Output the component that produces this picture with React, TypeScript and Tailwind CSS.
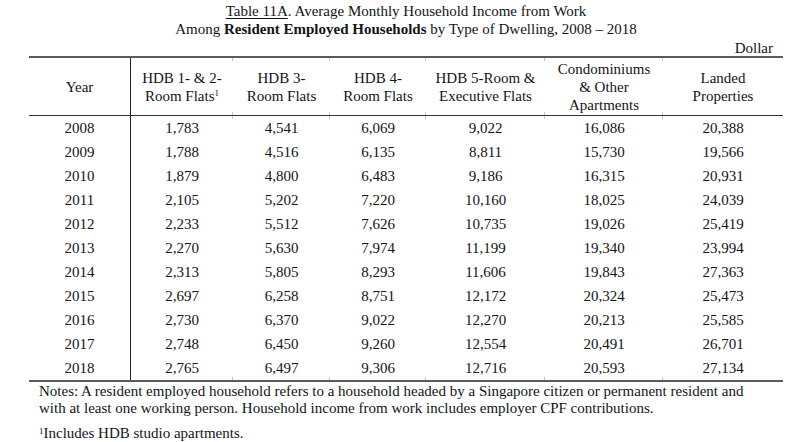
const columns = [
  { key: "year", label: ["Year"] },
  { key: "hdb12", label: ["HDB 1- & 2-", "Room Flats"], sup: true },
  { key: "hdb3", label: ["HDB 3-", "Room Flats"] },
  { key: "hdb4", label: ["HDB 4-", "Room Flats"] },
  { key: "hdb5", label: ["HDB 5-Room &", "Executive Flats"] },
  { key: "condo", label: ["Condominiums", "& Other", "Apartments"] },
  { key: "landed", label: ["Landed", "Properties"] },
];

const rows: string[][] = [
  ["2008", "1,783", "4,541", "6,069", "9,022", "16,086", "20,388"],
  ["2009", "1,788", "4,516", "6,135", "8,811", "15,730", "19,566"],
  ["2010", "1,879", "4,800", "6,483", "9,186", "16,315", "20,931"],
  ["2011", "2,105", "5,202", "7,220", "10,160", "18,025", "24,039"],
  ["2012", "2,233", "5,512", "7,626", "10,735", "19,026", "25,419"],
  ["2013", "2,270", "5,630", "7,974", "11,199", "19,340", "23,994"],
  ["2014", "2,313", "5,805", "8,293", "11,606", "19,843", "27,363"],
  ["2015", "2,697", "6,258", "8,751", "12,172", "20,324", "25,473"],
  ["2016", "2,730", "6,370", "9,022", "12,270", "20,213", "25,585"],
  ["2017", "2,748", "6,450", "9,260", "12,554", "20,491", "26,701"],
  ["2018", "2,765", "6,497", "9,306", "12,716", "20,593", "27,134"],
];

function Tick({ side }: { side: "top" | "bottom" }) {
  return (
    <span
      className={
        side === "top"
          ? "absolute left-[-1px] top-0 h-[3px] w-px bg-[#c4c4c4]"
          : "absolute left-[-1px] bottom-0 h-[3px] w-px bg-[#c4c4c4]"
      }
    />
  );
}

export default function App() {
  return (
    <div className="w-[809px] h-[442px] overflow-hidden bg-white font-['Liberation_Serif','Times_New_Roman',serif] text-[15px] text-[#141414]">
      <div className="ml-[29px] w-[754px]">
        {/* title */}
        <div className="pt-[2px] text-center leading-[18px]">
          <div>
            <span className="underline underline-offset-2">Table 11A</span>. Average Monthly Household Income from Work
          </div>
          <div>
            Among <span className="font-bold">Resident Employed Households</span> by Type of Dwelling, 2008 – 2018
          </div>
        </div>
        <div className="pr-[10px] text-right leading-[16px] mt-[2px]">Dollar</div>

        {/* table */}
        <div className="border-t-2 border-b-2 border-[#5a5a5a]">
          <div className="grid grid-cols-[102px_102px_97px_96px_119px_118px_120px] border-b border-[#333]">
            {columns.map((c, i) => (
              <div
                key={c.key}
                className={
                  i === 0
                    ? "relative flex h-[57px] items-center justify-center border-r border-[#222] text-center leading-[18px]"
                    : "relative flex h-[57px] items-center justify-center text-center leading-[18px]"
                }
              >
                {i > 1 && <Tick side="top" />}
                {i > 1 && <Tick side="bottom" />}
                <div>
                  {c.label.map((l, j) => (
                    <div key={j}>
                      {l}
                      {c.sup && j === c.label.length - 1 && (
                        <sup className="text-[9px]">1</sup>
                      )}
                    </div>
                  ))}
                </div>
              </div>
            ))}
          </div>

          {rows.map((r, ri) => (
            <div
              key={r[0]}
              className="grid grid-cols-[102px_102px_97px_96px_119px_118px_120px]"
            >
              {r.map((v, i) => (
                <div
                  key={i}
                  className={
                    i === 0
                      ? "relative flex h-[24px] items-center justify-center border-r border-[#222]"
                      : "relative flex h-[24px] items-center justify-center"
                  }
                >
                  {i > 1 && ri === 0 && <Tick side="top" />}
                  {i > 1 && ri === rows.length - 1 && <Tick side="bottom" />}
                  {v}
                </div>
              ))}
            </div>
          ))}
        </div>

        {/* notes */}
        <div className="pl-[10px] pt-[1px] leading-[17px] whitespace-nowrap">
          <div>
            Notes: A resident employed household refers to a household headed by a Singapore citizen or permanent resident and
          </div>
          <div>
            with at least one working person. Household income from work includes employer CPF contributions.
          </div>
          <div className="mt-[8px]">
            <sup className="text-[9px]">1</sup>Includes HDB studio apartments.
          </div>
        </div>
      </div>
    </div>
  );
}
